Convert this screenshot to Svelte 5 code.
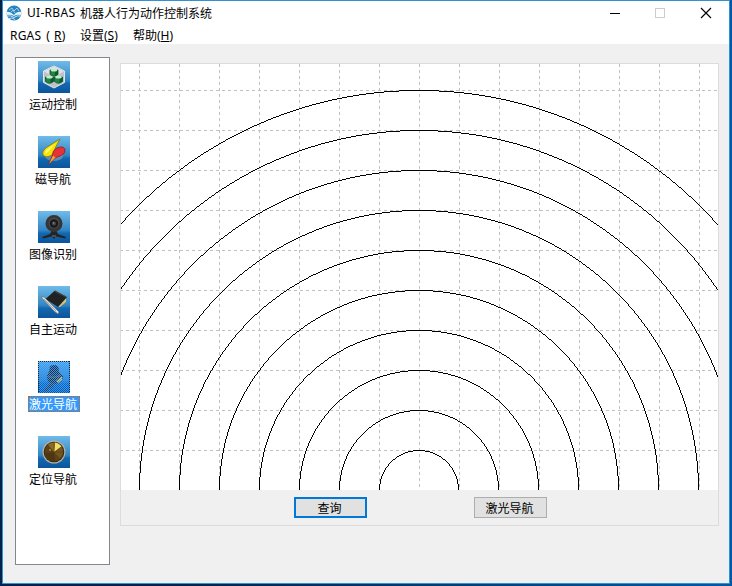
<script>
  const items = [
    { id: 'motion', label: '运动控制' },
    { id: 'magnet', label: '磁导航' },
    { id: 'camera', label: '图像识别' },
    { id: 'auto', label: '自主运动' },
    { id: 'laser', label: '激光导航' },
    { id: 'radar', label: '定位导航' }
  ];
  let selected = $state('laser');

  const columns = Array.from({ length: 15 }, (_, i) => 18.5 + i * 40);
  const rows = Array.from({ length: 10 }, (_, i) => 26.5 + i * 40);

  // Upper half of a range ring, plotted one pixel wide around (298, 426).
  function ringPath(r) {
    let d = '';
    for (let k = 0.5; k <= r * Math.SQRT1_2 + 0.5; k++) {
      const s = Math.sqrt(r * r - k * k);
      const row = Math.floor(426 - s) + 0.5;
      const left = Math.floor(298 - s);
      d += `M${298 - k - 0.5} ${row}h1M${298 + k - 0.5} ${row}h1`;
      d += `M${left} ${426 - k}h1M${595 - left} ${426 - k}h1`;
    }
    return d;
  }
  const rings = Array.from({ length: 10 }, (_, i) => ringPath((i + 1) * 40 - 0.5));
</script>

<div class="desktop">
  <div class="window">
    <header class="titlebar">
      <svg class="logo" width="16" height="16" viewBox="0 0 16 16">
        <circle cx="8" cy="8" r="7.500" fill="#2583bd" />
        <path d="M0 7Q4 6 8 10Q11 6 16 7L15 10Q11 9 8 11Q4 9 1 10Z" fill="#e8f5fb" />
        <path d="M1 11Q5 10 8 12.500Q11 10 15 11M3 13.500Q6 12 9 14.500" fill="none" stroke="#c7e5f4" stroke-width="1" />
        <path d="M3 5L6 3L8 6L11 3L13 6M5 7L7 5L9 8" fill="none" stroke="#a9d8ee" stroke-width=".9" />
      </svg>
      <span class="title"><span class="latin">UI-RBAS</span>机器人行为动作控制系统</span>
      <div class="controls">
        <svg width="10" height="10" viewBox="0 0 10 10" shape-rendering="crispEdges"><path d="M0 5.500H10" stroke="#000" /></svg>
        <svg width="10" height="10" viewBox="0 0 10 10" shape-rendering="crispEdges"><rect x=".5" y=".5" width="9" height="9" fill="none" stroke="#ccc" /></svg>
        <svg width="10" height="10" viewBox="0 0 10 10"><path d="M0 0L10 10M10 0L0 10" stroke="#000" stroke-width="1.15" /></svg>
      </div>
    </header>
    <nav class="menu">
      <span class="m1">RGAS<span class="paren">(</span><u>R</u>)</span>
      <span class="m2">设置(<u>S</u>)</span>
      <span class="m3">帮助(<u>H</u>)</span>
    </nav>
    <main>
      <aside>
        {#each items as item}
          <button class="item" class:selected={selected === item.id} onclick={() => (selected = item.id)}>
            <svg width="32" height="32" viewBox="0 0 32 32">
              <defs>
                <linearGradient id="bg-{item.id}" x1="0" y1="0" x2="0" y2="1">
                  <stop offset="0" stop-color="#70bce9" />
                  <stop offset=".6" stop-color="#3385c4" />
                  <stop offset=".7" stop-color="#1268b0" />
                  <stop offset="1" stop-color="#0b559c" />
                </linearGradient>
              </defs>
              <rect width="32" height="32" fill="url(#bg-{item.id})" />
              {#if item.id === 'motion'}
                <path d="M16 5L26.500 10V21.500L16 27L5.500 21.500V10Z" fill="#bcc2c8" stroke="#dfe5e9" />
                <path d="M16 5.500L26 10.500L16 16L6 10.500Z" fill="#dfe2e5" />
                {#each [[16, 9], [11.5, 16], [20.5, 16]] as [x, y]}
                  <path d="M{x - 4} {y}V{y + 4.5}Q{x} {y + 8} {x + 4} {y + 4.5}V{y}Z" fill="#1d8644" stroke="#0b4d24" stroke-width=".8" />
                  <path d="M{x + 1} {y}V{y + 6}L{x + 4} {y + 4.5}V{y}Z" fill="#0b5a2a" />
                  <ellipse cx={x} cy={y} rx="3.300" ry="1.600" fill="#c0ecca" />
                {/each}
              {:else if item.id === 'magnet'}
                <ellipse cx="16" cy="20" rx="9" ry="5" fill="#8fa5bb" opacity=".6" />
                <path d="M22 3L8.500 11.500Q3 16 5.500 19.500Q9 22.500 14.500 18.500Q17 16.500 17 12.500Z" fill="#f6e500" stroke="#81720c" stroke-width=".8" />
                <path d="M18 7L9 13.500Q6 16 8 18Z" fill="#fff77c" />
                <path d="M11 28L14.500 19Q14 14.500 19 12Q25 9.500 27 13Q28 17 23.500 19.500L18 21.500Z" fill="#e73235" stroke="#8c1f2d" stroke-width=".8" />
                <path d="M11 28L15 19.500L17.500 21.500Z" fill="#f3a52b" />
              {:else if item.id === 'camera'}
                <path d="M4 26L12 23L14 19H18L20 23L28 26L27 27.500L18 25.500L16 28L14 25.500L5 27.500Z" fill="#252525" />
                <circle cx="16" cy="12.500" r="8.500" fill="#353535" />
                <circle cx="16" cy="12" r="5.500" fill="#4a4948" />
                <circle cx="16" cy="12.500" r="4.200" fill="#17191b" />
                <circle cx="16" cy="12.500" r="2" fill="#46484f" />
                <circle cx="15.500" cy="12" r=".7" fill="#8b959d" />
                <path d="M14 25H18" stroke="#777" />
              {:else if item.id === 'auto'}
                <path d="M20 21L28 12V16L22 21Z" fill="#d7c36b" />
                <path d="M7.500 13L17 4.500L29 11L20 21Z" fill="#222" />
                <path d="M17 5.500L28 11" stroke="#494949" />
                <path d="M3 11L6 11L21 26L20 28L16 25Z" fill="#e4e2dc" stroke="#67747c" stroke-width=".7" />
                <path d="M6 13L18 25" stroke="#a5a49f" stroke-width="1" />
              {:else if item.id === 'laser'}
                <path d="M12 8Q15 3 20 6L21 11L25 15L24 20L18 23L10 21L9 15Z" fill="#302d29" />
                <path d="M5 31L11 23L17 21L15 26L8 30Z" fill="#3b3a36" />
                <ellipse cx="16" cy="7.500" rx="4.500" ry="3.500" fill="#2b2c2e" />
                <path d="M10 15Q16 18 23 14" stroke="#63533f" stroke-width="1.500" fill="none" />
                <path d="M18 20L24 15V19L20 22Z" fill="#f0ca30" />
              {:else}
                <circle cx="16" cy="16" r="11.500" fill="#b3b1a3" />
                <circle cx="16" cy="16" r="10.300" fill="#302313" />
                <circle cx="16" cy="16" r="9.500" fill="#5e4216" />
                <path d="M16 16L17 6.500Q21 7 23.500 10.500Z" fill="#f3df60" />
                <path d="M16 16L10 8.500Q13 6.500 17 6.500Z" fill="#8b6b28" />
                <path d="M16 16L23.500 10.500Q27 17 22 22Z" fill="#76551f" />
                <path d="M7 16H25M16 7V25" stroke="#4a3416" stroke-width=".4" />
                <circle cx="12" cy="14" r="1" fill="#b48c37" />
                <path d="M7 17Q9 25 17 25L16 17Z" fill="#3b290f" opacity=".5" />
              {/if}
              {#if selected === item.id}
                <defs>
                  <pattern id="dither" width="2" height="2" patternUnits="userSpaceOnUse">
                    <path d="M0 0H1V1H0ZM1 1H2V2H1Z" fill="#3399ff" />
                  </pattern>
                </defs>
                <rect width="32" height="32" fill="url(#dither)" shape-rendering="crispEdges" />
                <path d="M.5 0V32M31.500 0V32M0 .5H32" stroke="#13253b" stroke-dasharray="1 1" shape-rendering="crispEdges" />
              {/if}
            </svg>
            <span>{item.label}</span>
          </button>
        {/each}
      </aside>
      <section class="panel">
        <svg class="chart" width="597" height="426" viewBox="0 0 597 426" shape-rendering="crispEdges" fill="none">
          <g stroke="#c0c0c0" stroke-dasharray="3 3">
            {#each columns as x}<path d="M{x} 0V426" />{/each}
            {#each rows as y}<path d="M-1 {y}H597" />{/each}
          </g>
          <g stroke="#000">
            {#each rings as d}<path {d} />{/each}
          </g>
        </svg>
        <footer>
          <button class="action primary">查询</button>
          <button class="action">激光导航</button>
        </footer>
      </section>
    </main>
  </div>
</div>

<style>
  * { box-sizing: border-box; }
  .desktop {
    width: 732px; height: 586px; padding: 0 2px 2px;
    background: linear-gradient(90deg, #03234a 0 3px, transparent 3px 729px, #0059a8 729px),
      linear-gradient(90deg, #03234a 0 25%, #0059a8);
    font: 12px/16px "Noto Sans CJK SC", sans-serif; color: #000;
    overflow: hidden;
  }
  .window {
    width: 728px; height: 584px; border: 1px solid #3292ce;
    background: #f0f0f0; display: flex; flex-direction: column;
  }
  .titlebar { height: 25px; background: #fff; display: flex; align-items: center; padding: 0 0 1px 3px; flex: none; }
  .logo { margin-right: 5px; }
  .title { display: flex; white-space: nowrap; }
  .latin { width: 53px; font-family: "Noto Sans", sans-serif; letter-spacing: .3px; }
  .controls { margin-left: auto; display: flex; gap: 35px; padding-right: 18px; }
  .controls svg { display: block; overflow: visible; }
  .controls svg:last-child { margin-left: 1px; }
  .menu {
    height: 18px; background: #fff; display: flex; padding-left: 7px; line-height: 19px; flex: none;
    font-family: "Noto Sans", "Noto Sans CJK SC", sans-serif; white-space: nowrap;
  }
  .m1 { width: 70px; letter-spacing: .2px; }
  .paren { margin: 0 4px 0 5px; }
  .m2 { width: 53px; }
  u { text-underline-offset: 1px; }
  main { display: flex; flex: 1; padding: 13px 10px 0 12px; align-items: flex-start; }
  aside {
    width: 95px; height: 508px; border: 1px solid #828790; background: #fff;
    display: flex; flex-direction: column; align-items: flex-start; padding-top: 3px; flex: none;
  }
  button { font: inherit; color: inherit; }
  .item {
    display: flex; flex-direction: column; align-items: center; gap: 3px;
    height: 75px; width: 76px; border: 0; background: none; padding: 0; flex: none;
  }
  .item svg { display: block; }
  .item span {
    height: 16px; line-height: 13px; padding: 0 2px 0 0; border: 1px solid transparent;
    white-space: nowrap;
  }
  .item.selected span { background: #3399ff; color: #fff; border: 1px dotted #cc6600; }
  .panel { margin: 6px 0 0 10px; width: 599px; height: 463px; border: 1px solid #dcdcdc; }
  .chart { display: block; background: #fff; }
  footer { display: flex; gap: 107px; padding: 7px 0 0 173px; }
  .action { width: 73px; height: 21px; padding: 0 2px 0 0; border: 1px solid #adadad; background: #e1e1e1; line-height: 17px; }
  .primary { border: 2px solid #0078d7; line-height: 15px; }
</style>
